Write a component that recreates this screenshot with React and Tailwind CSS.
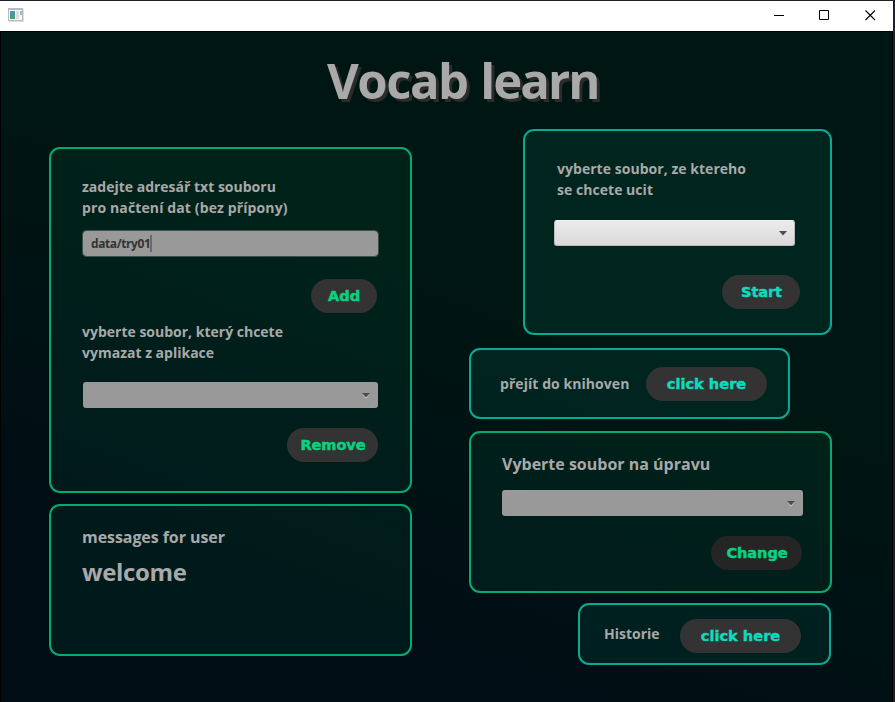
import React from "react";

const ui = "font-['Open_Sans','Noto_Sans',sans-serif] font-bold text-[#a9a9a9] whitespace-pre";

function Panel({ className, children }) {
  return <section className={`rounded-[11px] border-2 flex flex-col shrink-0 ${className}`}>{children}</section>;
}

function Pill({ className, children }) {
  return (
    <button
      className={`h-[34px] shrink-0 rounded-full flex items-center justify-center whitespace-pre font-['DejaVu_Sans',sans-serif] font-bold text-[14.6px] leading-none [-webkit-text-stroke:0.45px_currentColor] ${className}`}
    >
      {children}
    </button>
  );
}

function Arrow({ light }) {
  return (
    <svg width="8" height="6" viewBox="0 0 8 6" className={light ? "mt-px" : "mt-[2px]"} aria-hidden="true">
      {light && <path d="M0.5 1h7L4 6z" fill="#cfcfcf" />}
      <path d="M0 0h8L4 4.5z" fill="#4c4c4c" />
    </svg>
  );
}

function Combo({ className }) {
  return (
    <div className={`h-[26px] shrink-0 rounded-[3px] bg-[#999999] flex items-center justify-end pr-[8px] ${className}`}>
      <Arrow light />
    </div>
  );
}

export default function App() {
  return (
    <div className="w-[895px] h-[702px] overflow-hidden bg-[#20202a] pt-px flex flex-col">
      <div className="w-[893px] flex-1 flex flex-col">
        <header className="h-[30px] bg-white flex items-start justify-between pl-[8px] pr-[17px]">
          <svg className="mt-[7px]" width="16" height="14" viewBox="0 0 16 14" shapeRendering="crispEdges" aria-hidden="true">
            <path d="M1 1h15v13H1z" fill="#dedede" />
            <path d="M0 0h15v13H0z" fill="#b7bbbe" />
            <path d="M1 2h13v10H1z" fill="#f5f5f5" />
            <path d="M2 3h5v8H2z" fill="#4a9a8c" />
            <path d="M2 3h5v3H2z" fill="#5590ac" />
            <path d="M8 3h3v8H8z" fill="#dcdcdc" />
            <path d="M12 3h2v4h-2z" fill="#8fc5bd" />
          </svg>
          <div className="mt-[9px] flex items-center gap-[35px]">
            <svg width="10" height="11" viewBox="0 0 10 11" aria-hidden="true">
              <path d="M0 5.5h10" stroke="#000" />
            </svg>
            <svg width="11" height="11" viewBox="0 0 11 11" aria-hidden="true">
              <path d="M.5 .5h9v9h-9z" stroke="#000" fill="none" />
            </svg>
            <svg width="11" height="11" viewBox="0 0 11 11" aria-hidden="true">
              <path d="M.5 .5l9.5 9.5M10 .5l-9.5 9.5" stroke="#000" fill="none" strokeWidth="1.1" />
            </svg>
          </div>
        </header>

        <main className="flex-1 border border-b-0 border-black bg-[linear-gradient(201deg,#001612_42%,#000d15_80%)] flex flex-col">
          <h1 className={`${ui} h-[96px] pt-[14px] pl-[326px] text-[49px] leading-[68px] tracking-[-1.5px] [word-spacing:1.5px] [text-shadow:3px_3px_0_#2b2b2b]`}>
            Vocab <span className="tracking-[-1.9px]">learn</span>
          </h1>
          <div className="flex items-start gap-[57px] pl-[48px]">
            <div className="w-[363px] mt-[19px] flex flex-col gap-[11px]">
              <Panel className="h-[346px] border-[#03ab70] bg-[#00ff96]/5 pl-[31px] pr-[32px] pt-[27px]">
                <p className={`${ui} text-[14px] leading-[21px]`}>
                  {"zadejte adresář txt souboru\n"}
                  <span className="tracking-[0.12px]">pro načtení dat (bez přípony)</span>
                </p>
                <div className={`${ui} mt-[12px] -mr-px h-[27px] rounded-[4px] border border-[#3d504b] bg-[#999999] bg-clip-padding px-[8px] flex items-center text-[12px] tracking-[-0.4px]`}>
                  <span className="text-[#333333]">data/try01</span>
                  <span className="w-[2px] h-[17px] bg-[#6a6a6a]" />
                </div>
                <Pill className="mt-[22px] w-[66px] self-end mr-px bg-[#333333] text-[#06d383]">Add</Pill>
                <p className={`${ui} mt-[8px] text-[14px] leading-[21px]`}>{"vyberte soubor, který chcete\nvymazat z aplikace"}</p>
                <Combo className="mt-[19px] ml-px" />
                <Pill className="mt-[20px] w-[91px] self-end pl-px tracking-[-0.1px] bg-[#333333] text-[#06d383]">Remove</Pill>
              </Panel>
              <Panel className="h-[152px] border-[#03ab70] bg-[#00ff8c]/5 pl-[31px] pt-[19px]">
                <p className={`${ui} text-[16px] leading-[24px] tracking-[-0.07px]`}>messages for user</p>
                <p className={`${ui} text-[24px] leading-[32px] mt-[7px] tracking-[-0.35px]`}>welcome</p>
              </Panel>
            </div>

            <div className="w-[363px] mt-px flex flex-col">
              <Panel className="w-[309px] h-[206px] self-end border-[#05ab92] bg-[#00ffc8]/[0.065] pl-[29px] pr-[30px] pt-[27px]">
                <p className={`${ui} pl-[3px] text-[14px] leading-[21px] tracking-[0.04px]`}>{"vyberte soubor, ze ktereho\nse chcete ucit"}</p>
                <div className="mt-[20px] w-[241px] h-[26px] rounded-[3px] border border-[#bababa] border-t-[#f4f4f4] bg-linear-to-b from-[#ececec] to-[#d9d9d9] flex items-center justify-end pr-[7px]">
                  <Arrow />
                </div>
                <Pill className="mt-[29px] w-[78px] self-end pl-px tracking-[-0.1px] bg-[#333333] text-[#0bdcbe]">Start</Pill>
              </Panel>
              <section className="mt-[13px] w-[321px] h-[71px] rounded-[11px] border-2 border-[#05ab92] bg-[#00ffc8]/[0.065] flex items-center pl-[29px] pr-[21px] justify-between">
                <span className={`${ui} text-[14px] tracking-[0.06px]`}>přejít do knihoven</span>
                <Pill className="w-[121px] pt-px bg-[#333333] text-[#0bdcbe]">click here</Pill>
              </section>
              <Panel className="mt-[12px] h-[162px] border-[#03ab70] bg-[#00ff96]/5 pl-[31px] pr-[27px] pt-[19px]">
                <p className={`${ui} text-[16px] leading-[24px]`}>Vyberte soubor na úpravu</p>
                <Combo className="mt-[14px]" />
                <Pill className="mt-[20px] w-[91px] self-end mr-px pl-px tracking-[-0.1px] bg-[#252525] text-[#06d383]">Change</Pill>
              </Panel>
              <section className="mt-[10px] mr-px w-[253px] h-[62px] self-end rounded-[11px] border-2 border-[#05ab92] bg-[#00ffc8]/[0.065] flex items-center pl-[24px] pr-[28px] justify-between">
                <span className={`${ui} -mt-[2px] text-[14px]`}>Historie</span>
                <Pill className="mt-[3px] pt-px w-[121px] bg-[#333333] text-[#0bdcbe]">click here</Pill>
              </section>
            </div>
          </div>
        </main>
      </div>
    </div>
  );
}
